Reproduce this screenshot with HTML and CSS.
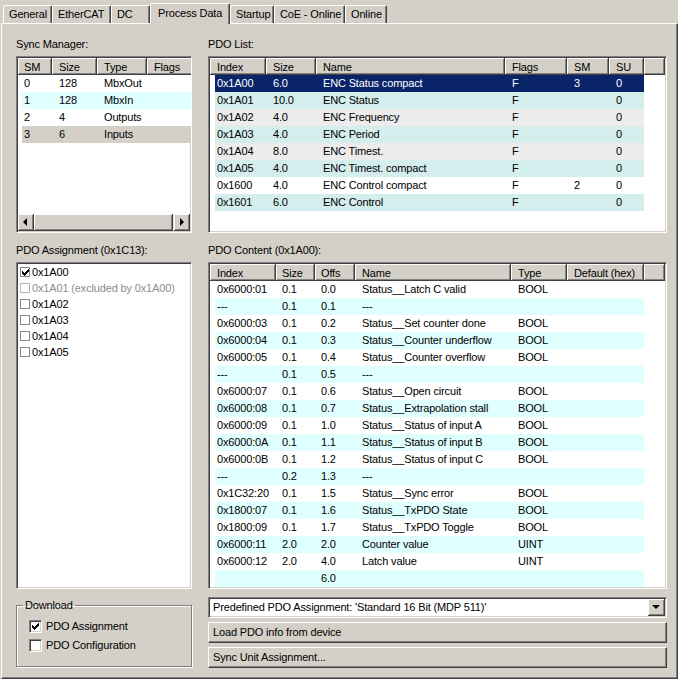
FILE: index.html
```html
<!DOCTYPE html>
<html>
<head>
<meta charset="utf-8">
<link rel="stylesheet" href="styles.css">
</head>
<body>
<div class="window">
  <div class="tabs">
    <div class="tab w-general">General</div>
    <div class="tab w-ethercat">EtherCAT</div>
    <div class="tab w-dc">DC</div>
    <div class="tab active w-process">Process Data</div>
    <div class="tab w-startup">Startup</div>
    <div class="tab w-coe">CoE - Online</div>
    <div class="tab w-online">Online</div>
  </div>
  <div class="panel">
    <div class="label">Sync Manager:</div>
    <div class="label">PDO List:</div>

    <div class="listbox sm">
      <div class="lv-head">
        <div class="hc c1">SM</div><div class="hc c2">Size</div><div class="hc c3">Type</div><div class="hc c4">Flags</div>
      </div>
      <div class="lv-row"><div class="c c1">0</div><div class="c c2">128</div><div class="c c3">MbxOut</div><div class="c c4"></div></div>
      <div class="lv-row cyan"><div class="c c1">1</div><div class="c c2">128</div><div class="c c3">MbxIn</div><div class="c c4"></div></div>
      <div class="lv-row"><div class="c c1">2</div><div class="c c2">4</div><div class="c c3">Outputs</div><div class="c c4"></div></div>
      <div class="lv-row grey"><div class="c c1">3</div><div class="c c2">6</div><div class="c c3">Inputs</div><div class="c c4"></div></div>
      <div class="hscroll">
        <div class="sb-btn"><span class="arr-left"></span></div>
        <div class="sb-thumb"></div>
        <div class="sb-btn"><span class="arr-right"></span></div>
      </div>
    </div>

    <div class="listbox pl">
      <div class="lv-head">
        <div class="hc c1">Index</div><div class="hc c2">Size</div><div class="hc c3">Name</div><div class="hc c4">Flags</div><div class="hc c5">SM</div><div class="hc c6">SU</div><div class="hc fill"></div>
      </div>
      <div class="lv-row sel"><div class="c c1">0x1A00</div><div class="c c2">6.0</div><div class="c c3">ENC Status compact</div><div class="c c4">F</div><div class="c c5">3</div><div class="c c6">0</div></div>
      <div class="lv-row teal"><div class="c c1">0x1A01</div><div class="c c2">10.0</div><div class="c c3">ENC Status</div><div class="c c4">F</div><div class="c c5"></div><div class="c c6">0</div></div>
      <div class="lv-row light"><div class="c c1">0x1A02</div><div class="c c2">4.0</div><div class="c c3">ENC Frequency</div><div class="c c4">F</div><div class="c c5"></div><div class="c c6">0</div></div>
      <div class="lv-row teal"><div class="c c1">0x1A03</div><div class="c c2">4.0</div><div class="c c3">ENC Period</div><div class="c c4">F</div><div class="c c5"></div><div class="c c6">0</div></div>
      <div class="lv-row light"><div class="c c1">0x1A04</div><div class="c c2">8.0</div><div class="c c3">ENC Timest.</div><div class="c c4">F</div><div class="c c5"></div><div class="c c6">0</div></div>
      <div class="lv-row teal"><div class="c c1">0x1A05</div><div class="c c2">4.0</div><div class="c c3">ENC Timest. compact</div><div class="c c4">F</div><div class="c c5"></div><div class="c c6">0</div></div>
      <div class="lv-row"><div class="c c1">0x1600</div><div class="c c2">4.0</div><div class="c c3">ENC Control compact</div><div class="c c4">F</div><div class="c c5">2</div><div class="c c6">0</div></div>
      <div class="lv-row teal"><div class="c c1">0x1601</div><div class="c c2">6.0</div><div class="c c3">ENC Control</div><div class="c c4">F</div><div class="c c5"></div><div class="c c6">0</div></div>
    </div>

    <div class="label second">PDO Assignment (0x1C13):</div>
    <div class="label second">PDO Content (0x1A00):</div>

    <div class="listbox pa">
      <div class="pa-item"><span class="mini-cb"><svg width="8" height="8" viewBox="0 0 8 8"><path transform="translate(1,1)" d="M6 0h1v1h-1z M5 1h2v1h-2z M0 2h1v1h-1z M4 2h3v1h-3z M0 3h2v1h-2z M3 3h3v1h-3z M0 4h5v1h-5z M1 5h3v1h-3z M2 6h1v1h-1z" fill="#000"/></svg></span>0x1A00</div>
      <div class="pa-item disabled"><span class="mini-cb"></span>0x1A01 (excluded by 0x1A00)</div>
      <div class="pa-item"><span class="mini-cb"></span>0x1A02</div>
      <div class="pa-item"><span class="mini-cb"></span>0x1A03</div>
      <div class="pa-item"><span class="mini-cb"></span>0x1A04</div>
      <div class="pa-item"><span class="mini-cb"></span>0x1A05</div>
    </div>

    <div class="listbox pc">
      <div class="lv-head">
        <div class="hc c1">Index</div><div class="hc c2">Size</div><div class="hc c3">Offs</div><div class="hc c4">Name</div><div class="hc c5">Type</div><div class="hc c6">Default (hex)</div><div class="hc fill"></div>
      </div>
      <div class="lv-row"><div class="c c1">0x6000:01</div><div class="c c2">0.1</div><div class="c c3">0.0</div><div class="c c4">Status__Latch C valid</div><div class="c c5">BOOL</div><div class="c c6"></div></div>
      <div class="lv-row cyan"><div class="c c1">---</div><div class="c c2">0.1</div><div class="c c3">0.1</div><div class="c c4">---</div><div class="c c5"></div><div class="c c6"></div></div>
      <div class="lv-row"><div class="c c1">0x6000:03</div><div class="c c2">0.1</div><div class="c c3">0.2</div><div class="c c4">Status__Set counter done</div><div class="c c5">BOOL</div><div class="c c6"></div></div>
      <div class="lv-row cyan"><div class="c c1">0x6000:04</div><div class="c c2">0.1</div><div class="c c3">0.3</div><div class="c c4">Status__Counter underflow</div><div class="c c5">BOOL</div><div class="c c6"></div></div>
      <div class="lv-row"><div class="c c1">0x6000:05</div><div class="c c2">0.1</div><div class="c c3">0.4</div><div class="c c4">Status__Counter overflow</div><div class="c c5">BOOL</div><div class="c c6"></div></div>
      <div class="lv-row cyan"><div class="c c1">---</div><div class="c c2">0.1</div><div class="c c3">0.5</div><div class="c c4">---</div><div class="c c5"></div><div class="c c6"></div></div>
      <div class="lv-row"><div class="c c1">0x6000:07</div><div class="c c2">0.1</div><div class="c c3">0.6</div><div class="c c4">Status__Open circuit</div><div class="c c5">BOOL</div><div class="c c6"></div></div>
      <div class="lv-row cyan"><div class="c c1">0x6000:08</div><div class="c c2">0.1</div><div class="c c3">0.7</div><div class="c c4">Status__Extrapolation stall</div><div class="c c5">BOOL</div><div class="c c6"></div></div>
      <div class="lv-row"><div class="c c1">0x6000:09</div><div class="c c2">0.1</div><div class="c c3">1.0</div><div class="c c4">Status__Status of input A</div><div class="c c5">BOOL</div><div class="c c6"></div></div>
      <div class="lv-row cyan"><div class="c c1">0x6000:0A</div><div class="c c2">0.1</div><div class="c c3">1.1</div><div class="c c4">Status__Status of input B</div><div class="c c5">BOOL</div><div class="c c6"></div></div>
      <div class="lv-row"><div class="c c1">0x6000:0B</div><div class="c c2">0.1</div><div class="c c3">1.2</div><div class="c c4">Status__Status of input C</div><div class="c c5">BOOL</div><div class="c c6"></div></div>
      <div class="lv-row cyan"><div class="c c1">---</div><div class="c c2">0.2</div><div class="c c3">1.3</div><div class="c c4">---</div><div class="c c5"></div><div class="c c6"></div></div>
      <div class="lv-row"><div class="c c1">0x1C32:20</div><div class="c c2">0.1</div><div class="c c3">1.5</div><div class="c c4">Status__Sync error</div><div class="c c5">BOOL</div><div class="c c6"></div></div>
      <div class="lv-row cyan"><div class="c c1">0x1800:07</div><div class="c c2">0.1</div><div class="c c3">1.6</div><div class="c c4">Status__TxPDO State</div><div class="c c5">BOOL</div><div class="c c6"></div></div>
      <div class="lv-row"><div class="c c1">0x1800:09</div><div class="c c2">0.1</div><div class="c c3">1.7</div><div class="c c4">Status__TxPDO Toggle</div><div class="c c5">BOOL</div><div class="c c6"></div></div>
      <div class="lv-row cyan"><div class="c c1">0x6000:11</div><div class="c c2">2.0</div><div class="c c3">2.0</div><div class="c c4">Counter value</div><div class="c c5">UINT</div><div class="c c6"></div></div>
      <div class="lv-row"><div class="c c1">0x6000:12</div><div class="c c2">2.0</div><div class="c c3">4.0</div><div class="c c4">Latch value</div><div class="c c5">UINT</div><div class="c c6"></div></div>
      <div class="lv-row cyan"><div class="c c1"></div><div class="c c2"></div><div class="c c3">6.0</div><div class="c c4"></div><div class="c c5"></div><div class="c c6"></div></div>
    </div>

    <fieldset class="download">
      <legend>Download</legend>
      <div class="cb-list">
        <div class="cb-row"><span class="cb3d"><svg width="9" height="9" viewBox="0 0 9 9"><path transform="translate(1,1)" d="M6 0h1v1h-1z M5 1h2v1h-2z M0 2h1v1h-1z M4 2h3v1h-3z M0 3h2v1h-2z M3 3h3v1h-3z M0 4h5v1h-5z M1 5h3v1h-3z M2 6h1v1h-1z" fill="#000"/></svg></span>PDO Assignment</div>
        <div class="cb-row"><span class="cb3d"></span>PDO Configuration</div>
      </div>
    </fieldset>

    <div class="actions">
      <div class="combo">
        <div class="combo-text">Predefined PDO Assignment: 'Standard 16 Bit (MDP 511)'</div>
        <div class="combo-btn"><span class="arr-down"></span></div>
      </div>
      <button class="btn">Load PDO info from device</button>
      <button class="btn">Sync Unit Assignment...</button>
    </div>
  </div>
</div>
</body>
</html>
```
FILE: styles.css
```css
* { box-sizing: border-box; }
html, body { margin: 0; padding: 0; }
body {
  background: #d4d0c8;
  font-family: "Liberation Sans", Arial, sans-serif;
  font-size: 11px;
  letter-spacing: -0.15px;
  color: #000;
  width: 678px;
  height: 679px;
  overflow: hidden;
}
.window { width: 678px; height: 679px; display: flex; flex-direction: column; }

/* tabs */
.tabs { height: 23px; flex: none; display: flex; align-items: flex-end; padding-left: 3px; }
.tab {
  flex: none;
  height: 18px;
  line-height: 17px;
  padding-left: 5px;
  border-top: 1px solid #fff;
  border-left: 1px solid #fff;
  border-right: 1px solid #404040;
  box-shadow: inset -1px 0 #808080;
  border-radius: 2px 2px 0 0;
  white-space: nowrap;
  background: #d4d0c8;
}
.tab.active {
  height: 21px;
  line-height: 18px;
  padding-left: 7px;
  margin-bottom: -1px;
  position: relative;
  z-index: 1;
}
.w-general { width: 49px; }
.w-ethercat { width: 59px; }
.w-dc { width: 39px; }
.w-process { width: 80px; }
.w-startup { width: 44px; }
.w-coe { width: 71px; }
.w-online { width: 42px; }

/* panel */
.panel {
  flex: 1;
  width: 677px;
  margin-left: 1px;
  border-top: 1px solid #fff;
  border-left: 1px solid #fff;
  border-right: 1px solid #404040;
  border-bottom: 1px solid #404040;
  box-shadow: inset -1px -1px #808080;
  padding: 12px 0 0 14px;
  display: grid;
  grid-template-columns: 176px 459px;
  grid-template-rows: auto 177px auto 327px auto;
  column-gap: 16px;
  align-content: start;
}
.label { height: 16px; line-height: 16px; margin-bottom: 4px; white-space: nowrap; }
.label.second { margin-top: 9px; }

/* list views */
.listbox {
  background: #fff;
  border: 1px solid;
  border-color: #808080 #fff #fff #808080;
  box-shadow: inset 1px 1px #404040, inset -1px -1px #d4d0c8;
  padding: 1px;
  overflow: hidden;
  display: flex;
  flex-direction: column;
  min-width: 0;
}
.lv-head { display: flex; height: 17px; flex: none; }
.lv-head .hc {
  flex: none;
  height: 17px;
  background: #d4d0c8;
  border-right: 1px solid #404040;
  border-bottom: 1px solid #404040;
  box-shadow: inset 1px 1px #fff, inset -1px -1px #808080;
  padding: 2px 0 0 7px;
  line-height: 14px;
  white-space: nowrap;
  overflow: hidden;
}
.lv-head .fill { flex: 1; }
.lv-row {
  display: flex;
  flex: none;
  align-self: flex-start;
  height: 17px;
  line-height: 17px;
  white-space: nowrap;
  background: #fff;
}
.lv-row .c { flex: none; padding-left: 7px; overflow: hidden; height: 17px; }
.lv-row .c:first-child { padding-left: 2px; }
.lv-row.cyan { background: #e0ffff; }
.lv-row.grey { background: #d4d0c8; }
.lv-row.teal { background: #d4eded; }
.lv-row.light { background: #ececec; }
.lv-row.sel { background: #0a246a; color: #fff; }

/* sync manager */
.sm .lv-row { margin-left: 4px; }
.sm .hc.c1 { width: 34px; padding-left: 6px; }
.sm .hc.c2 { width: 45px; }
.sm .hc.c3 { width: 50px; }
.sm .hc.c4 { width: 60px; }
.sm .lv-row .c1 { width: 30px; }
.sm .lv-row .c2 { width: 45px; }
.sm .lv-row .c3 { width: 50px; }
.sm .lv-row .c4 { width: 60px; }

.hscroll { margin-top: auto; height: 17px; flex: none; display: flex; background: #ebe9e5; }
.sb-btn, .sb-thumb, .combo-btn {
  background: #d4d0c8;
  border-right: 1px solid #404040;
  border-bottom: 1px solid #404040;
  box-shadow: inset 1px 1px #fff, inset -1px -1px #808080;
}
.sb-btn { width: 16px; height: 17px; flex: none; display: flex; align-items: center; justify-content: center; }
.sb-thumb { flex: 1; height: 17px; margin-right: 1px; }
.arr-left { width: 0; height: 0; border-top: 4px solid transparent; border-bottom: 4px solid transparent; border-right: 4px solid #000; margin-left: -1px; }
.arr-right { width: 0; height: 0; border-top: 4px solid transparent; border-bottom: 4px solid transparent; border-left: 4px solid #000; }
.arr-down { width: 0; height: 0; border-left: 4px solid transparent; border-right: 4px solid transparent; border-top: 4px solid #000; }

/* pdo list */
.pl .lv-row { margin-left: 5px; }
.pl .hc.c1 { width: 56px; }
.pl .hc.c2 { width: 50px; }
.pl .hc.c3 { width: 189px; }
.pl .hc.c4 { width: 62px; }
.pl .hc.c5 { width: 42px; }
.pl .hc.c6 { width: 35px; }
.pl .lv-row .c1 { width: 51px; }
.pl .lv-row .c2 { width: 50px; }
.pl .lv-row .c3 { width: 189px; }
.pl .lv-row .c4 { width: 62px; }
.pl .lv-row .c5 { width: 42px; }
.pl .lv-row .c6 { width: 35px; }

/* pdo content */
.pc .lv-row { margin-left: 5px; }
.pc .hc.c1 { width: 66px; }
.pc .hc.c2 { width: 39px; padding-left: 6px; }
.pc .hc.c3 { width: 40px; padding-left: 6px; }
.pc .hc.c4 { width: 156px; }
.pc .hc.c5 { width: 56px; }
.pc .hc.c6 { width: 77px; }
.pc .lv-row .c1 { width: 61px; }
.pc .lv-row .c2 { width: 39px; padding-left: 6px; }
.pc .lv-row .c3 { width: 40px; padding-left: 6px; }
.pc .lv-row .c4 { width: 156px; }
.pc .lv-row .c5 { width: 56px; }
.pc .lv-row .c6 { width: 77px; }

/* pdo assignment */
.pa-item { display: flex; align-items: center; height: 16px; line-height: 16px; padding-left: 2px; gap: 2px; white-space: nowrap; }
.mini-cb { width: 10px; height: 10px; flex: none; border: 1px solid #8a8a8a; background: #fff; display: flex; }
.pa-item.disabled { color: #8d8d8d; }
.pa-item.disabled .mini-cb { border-color: #b8b8b8; }

/* download group */
.download {
  margin: 10px 0 0 0;
  min-width: 0;
  height: 68px;
  border: 1px solid #808080;
  box-shadow: inset 1px 1px #fff, 1px 1px #fff;
  padding: 8px 6px 0 6px;
}
.download legend { padding: 0 2px; line-height: 13px; font-size: 11px; }
.cb-list { margin-left: 6px; display: flex; flex-direction: column; gap: 6px; }
.cb-row { display: flex; align-items: center; gap: 4px; height: 13px; line-height: 13px; white-space: nowrap; }
.cb3d {
  width: 13px; height: 13px; flex: none;
  background: #fff;
  border: 1px solid;
  border-color: #808080 #fff #fff #808080;
  box-shadow: inset 1px 1px #404040, inset -1px -1px #d4d0c8;
  padding: 1px;
  display: flex;
}

/* actions */
.actions { margin-top: 8px; display: flex; flex-direction: column; gap: 4px; }
.combo {
  height: 21px;
  background: #fff;
  border: 1px solid;
  border-color: #808080 #fff #fff #808080;
  box-shadow: inset 1px 1px #404040, inset -1px -1px #d4d0c8;
  padding: 1px;
  display: flex;
}
.combo-text { flex: 1; line-height: 17px; padding-left: 3px; white-space: nowrap; }
.combo-btn { width: 17px; height: 17px; flex: none; display: flex; align-items: center; justify-content: center; }
.btn {
  height: 21px;
  margin: 0;
  padding: 0 0 0 4px;
  text-align: left;
  font-family: "Liberation Sans", Arial, sans-serif;
  font-size: 11px;
  letter-spacing: -0.15px;
  color: #000;
  line-height: 19px;
  background: #d4d0c8;
  border: 1px solid;
  border-color: #fff #404040 #404040 #fff;
  box-shadow: inset -1px -1px #808080;
  border-radius: 0;
}
```
